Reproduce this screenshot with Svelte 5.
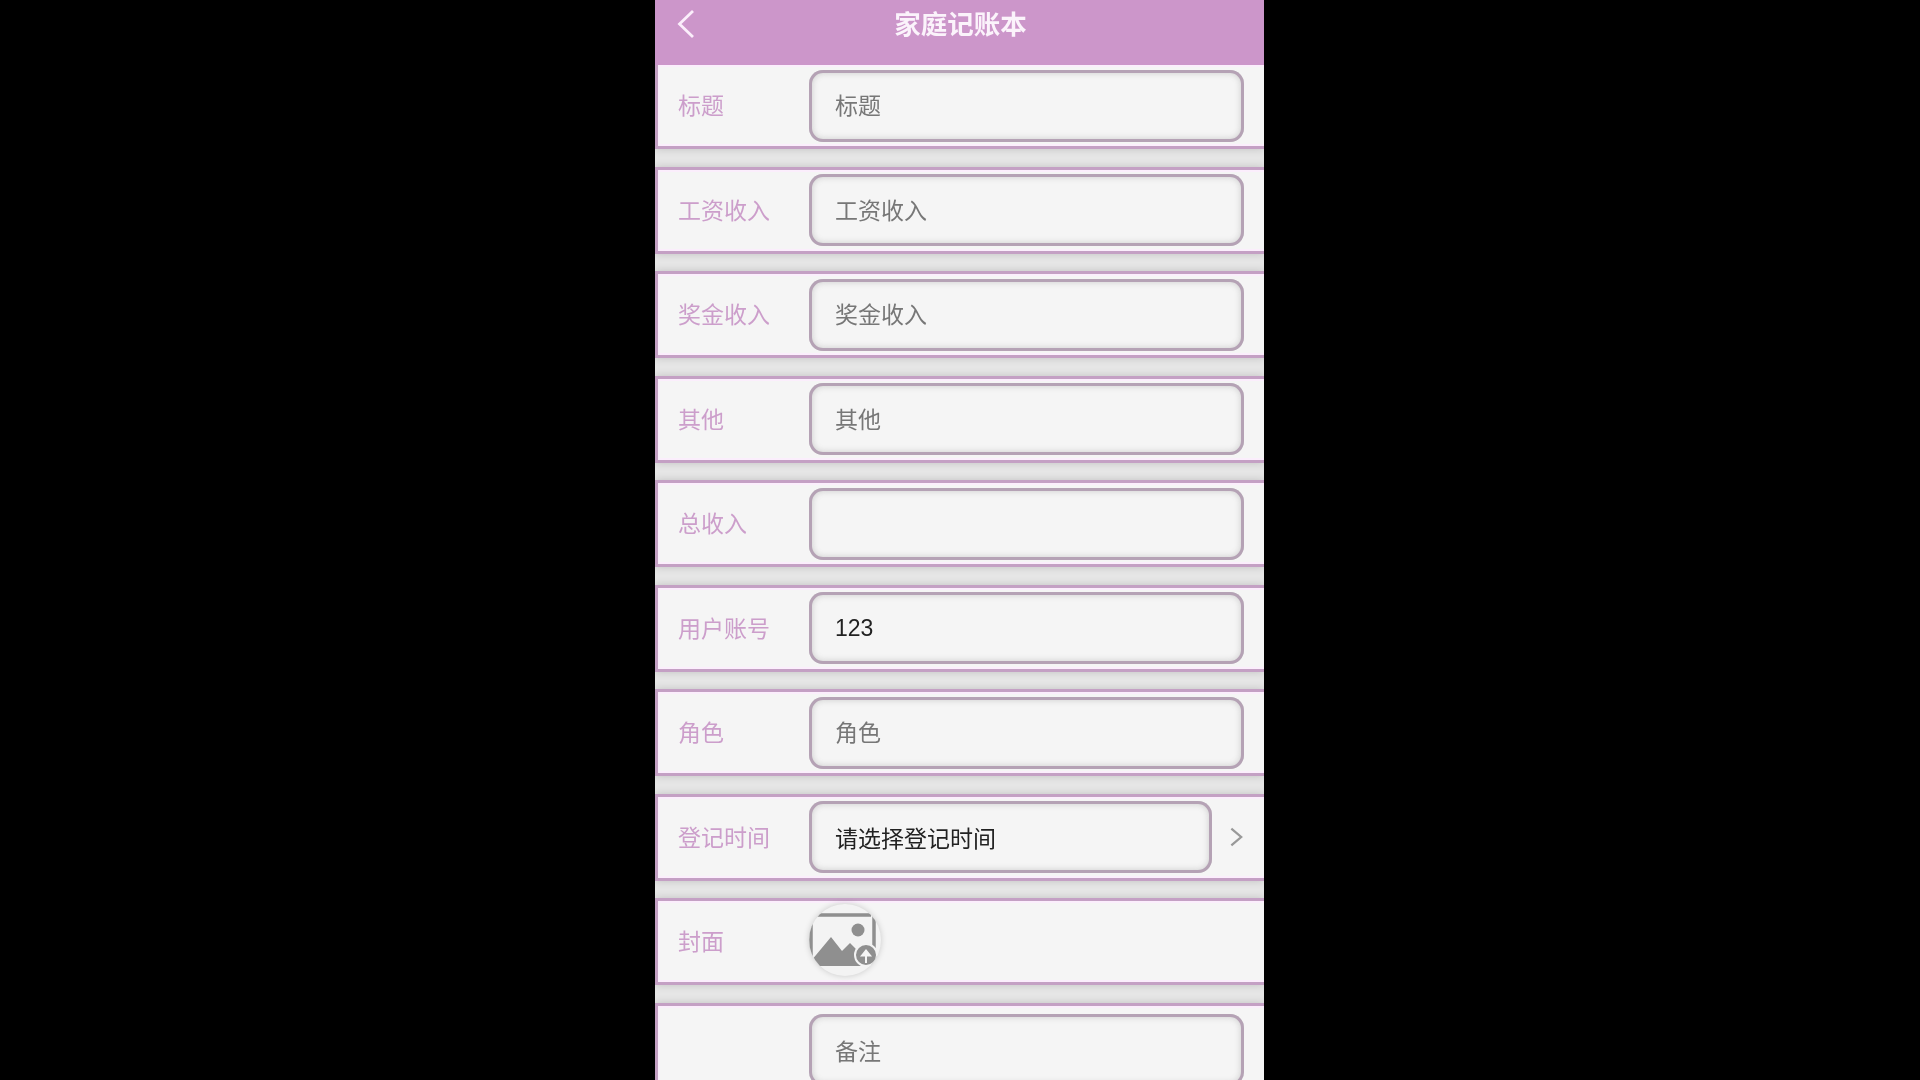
<script>
  const rows = [
    { label: '标题', ph: '标题' },
    { label: '工资收入', ph: '工资收入' },
    { label: '奖金收入', ph: '奖金收入' },
    { label: '其他', ph: '其他' },
    { label: '总收入', ph: '' },
    { label: '用户账号', value: '123' },
    { label: '角色', ph: '角色' },
    { label: '登记时间', value: '请选择登记时间', arrow: true },
    { label: '封面', upload: true },
    { label: '', ph: '备注', tall: true }
  ];
</script>

<div class="screen">
  <div class="phone">
    <header class="bar">
      <svg class="back" viewBox="0 0 20 32" width="20" height="32" aria-hidden="true">
        <path d="M17 3 L3.500 16 L17 29" fill="none" stroke="#fbeefb" stroke-width="2.800" />
      </svg>
      <h1>家庭记账本</h1>
    </header>
    <div class="form">
      {#each rows as r}
        <div class="row" class:tall={r.tall}>
          <div class="label">{r.label}</div>
          {#if r.upload}
            <div class="upload">
              <svg viewBox="0 0 72 72" width="72" height="72" aria-hidden="true">
                <path d="M6 11 H62 M2 12 V60 M65 12 V44" fill="none" stroke="#8f8f8f" stroke-width="3.500" />
                <circle cx="49" cy="26" r="6.500" fill="#8f8f8f" />
                <path d="M2 62 L2 57 L22 33 L33 47 L41 39 L54 52 L54 62 Z" fill="#8f8f8f" />
                <circle cx="57" cy="51" r="11" fill="#8f8f8f" stroke="#f3f3f3" stroke-width="2" />
                <path d="M57 59 V50 M53 51.500 L57 46.500 L61 51.500 Z" fill="#f5f5f5" stroke="#f5f5f5" stroke-width="2" />
              </svg>
            </div>
          {:else}
            <div class="field" class:short={r.arrow} class:filled={r.value} class:low={r.tall}>{r.value ?? r.ph}</div>
            {#if r.arrow}
              <svg class="chev" viewBox="0 0 16 22" width="16" height="22" aria-hidden="true">
                <path d="M2.500 2 L13 11 L2.500 20" fill="none" stroke="#999" stroke-width="2.400" />
              </svg>
            {/if}
          {/if}
        </div>
      {/each}
    </div>
  </div>
</div>

<style>
  :global(body) {
    margin: 0;
    background: #000;
  }
  .screen {
    width: 1920px;
    height: 1080px;
    display: flex;
    justify-content: center;
    background: #000;
    overflow: hidden;
    font-family: "Liberation Sans", "Noto Sans CJK SC", sans-serif;
  }
  .phone {
    width: 609px;
    height: 1080px;
    margin-right: 1px;
    overflow: hidden;
    background: #e6e6e6;
    filter: blur(0.6px);
  }
  .bar {
    position: relative;
    z-index: 1;
    height: 65px;
    background: #cc96ca;
    display: flex;
    justify-content: center;
    padding: 8px 0 0 2px;
    box-sizing: border-box;
  }
  .back {
    position: absolute;
    left: 21px;
    top: 8px;
  }
  h1 {
    margin: 0;
    font-size: 26.500px;
    line-height: 34px;
    font-weight: 700;
    color: #fbf3fb;
  }
  .form {
    margin-top: -3px;
    display: flex;
    flex-direction: column;
    gap: 17.500px;
  }
  .row {
    flex: none;
    height: 87px;
    box-sizing: border-box;
    border: solid #c4a0c4;
    border-width: 3px 0 3px 3px;
    background: #f5f5f5;
    box-shadow: inset 0 2px 0 #fbeefc, inset 0 -2px 0 #fbeefc, inset 2px 0 0 #fbeefc, 0 0 8px rgba(0, 0, 0, 0.16);
    display: flex;
    align-items: center;
    padding: 0 20px;
  }
  .row.tall {
    height: 120px;
    align-items: flex-start;
    padding-top: 8px;
  }
  .label {
    width: 131px;
    flex: none;
    font-size: 23px;
    color: #cc9ecb;
    padding-bottom: 3px;
  }
  .field {
    flex: 1;
    height: 72px;
    box-sizing: border-box;
    border-radius: 14px;
    background: #f5f5f5;
    box-shadow: inset 0 0 0 3px #b5a2b5, inset 0 0 6px 3px rgba(110, 110, 110, 0.3);
    padding: 0 0 3px 26px;
    display: flex;
    align-items: center;
    font-size: 23px;
    color: #777;
  }
  .field.filled {
    color: #222;
    padding-bottom: 0;
  }
  .field.low {
    padding-bottom: 0;
  }
  .field.short {
    flex: none;
    width: 403px;
  }
  .chev {
    margin-left: 17px;
  }
  .upload {
    width: 72px;
    height: 72px;
    margin-top: -3px;
    border-radius: 50%;
    background: #f3f3f3;
    box-shadow: 0 0 6px rgba(0, 0, 0, 0.18);
    overflow: hidden;
  }
  .upload svg {
    display: block;
  }
</style>
